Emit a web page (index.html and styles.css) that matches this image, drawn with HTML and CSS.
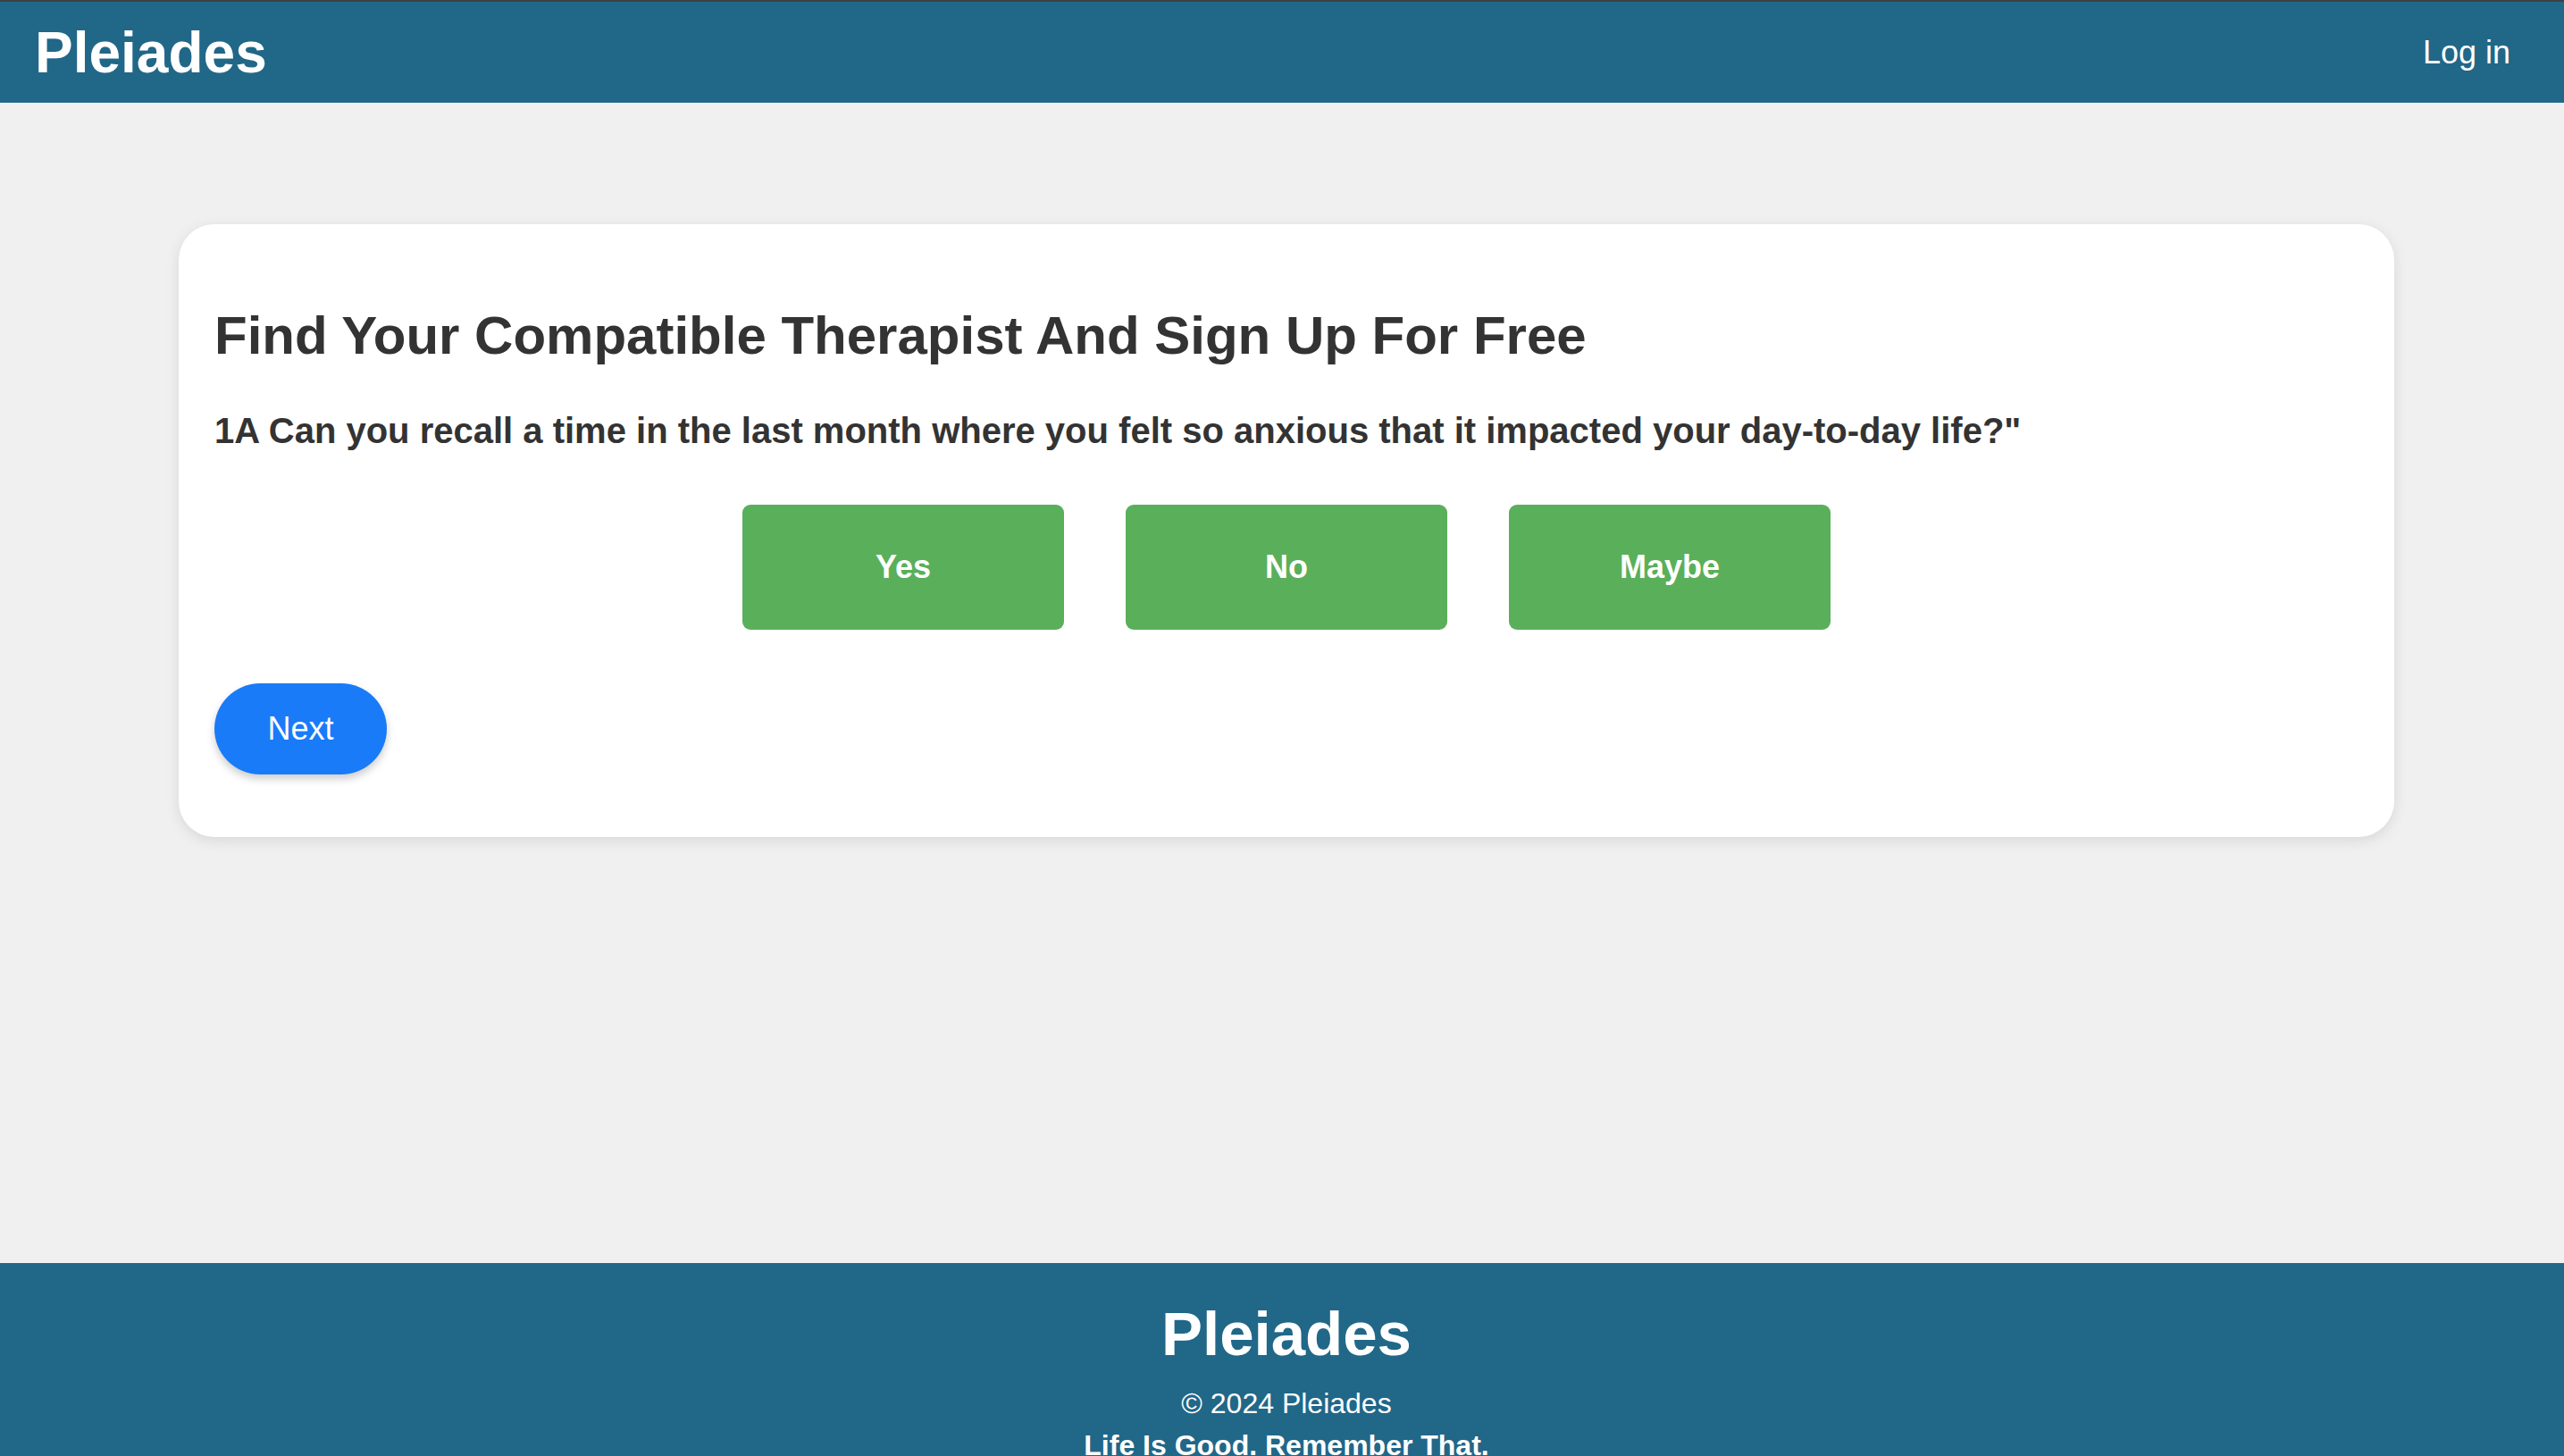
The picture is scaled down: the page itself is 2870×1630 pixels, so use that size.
FILE: index.html
```html
<!DOCTYPE html>
<html lang="en">
<head>
<meta charset="utf-8">
<title>Pleiades</title>
<link rel="stylesheet" href="styles.css">
</head>
<body>
<header class="topbar">
  <div class="brand">Pleiades</div>
  <a class="login" href="#">Log in</a>
</header>
<main class="main">
  <section class="card">
    <h2 class="card-title">Find Your Compatible Therapist And Sign Up For Free</h2>
    <p class="question">1A Can you recall a time in the last month where you felt so anxious that it impacted your day-to-day life?"</p>
    <div class="choices">
      <button class="choice">Yes</button>
      <button class="choice">No</button>
      <button class="choice">Maybe</button>
    </div>
    <button class="next">Next</button>
  </section>
</main>
<footer class="footer">
  <div class="footer-brand">Pleiades</div>
  <p class="copy">© 2024 Pleiades</p>
  <p class="motto">Life Is Good. Remember That.</p>
</footer>
</body>
</html>
```

FILE: styles.css
```css
* { box-sizing: border-box; }
html, body { margin: 0; padding: 0; }
body {
  font-family: "Liberation Sans", Arial, sans-serif;
  background: #f0f0f0;
  color: #333;
}
.topbar {
  height: 115px;
  border-top: 2px solid #3c4043;
  background: #216788;
  display: flex;
  align-items: center;
  justify-content: space-between;
  padding: 0 60px 0 39px;
}
.brand {
  color: #fff;
  font-size: 64px;
  font-weight: bold;
}
.login {
  color: #fff;
  font-size: 36px;
  text-decoration: none;
}
.main {
  min-height: 1299px;
  padding-top: 136px;
}
.card {
  margin-left: 200px;
  width: 2480px;
  background: #fff;
  border-radius: 40px;
  box-shadow: 0 4px 16px rgba(0, 0, 0, 0.1);
  padding: 40px 40px 70px;
}
.card-title {
  font-size: 60px;
  font-weight: bold;
  margin: 50px 0 50px;
  color: #333;
}
.question {
  font-size: 40px;
  font-weight: bold;
  margin: 0;
  color: #333;
}
.choices {
  display: flex;
  justify-content: center;
  gap: 69px;
  margin: 60px 0 60px;
}
.choice {
  width: 360px;
  height: 140px;
  border: none;
  border-radius: 9px;
  background: #5aaf5a;
  color: #fff;
  font-family: "Liberation Sans", Arial, sans-serif;
  font-size: 36px;
  font-weight: bold;
}
.next {
  display: block;
  width: 193px;
  height: 102px;
  border: none;
  border-radius: 51px;
  background: #1a7bf8;
  color: #fff;
  font-family: "Liberation Sans", Arial, sans-serif;
  font-size: 36px;
  box-shadow: 0 5px 10px rgba(0, 0, 0, 0.2);
}
.footer {
  background: #216788;
  color: #fff;
  text-align: center;
  padding: 40px 0 30px 10px;
}
.footer-brand {
  font-size: 69px;
  font-weight: bold;
}
.copy {
  font-size: 32px;
  margin: 20px 0 0;
}
.motto {
  font-size: 32px;
  font-weight: bold;
  margin: 10px 0 0;
}
```
